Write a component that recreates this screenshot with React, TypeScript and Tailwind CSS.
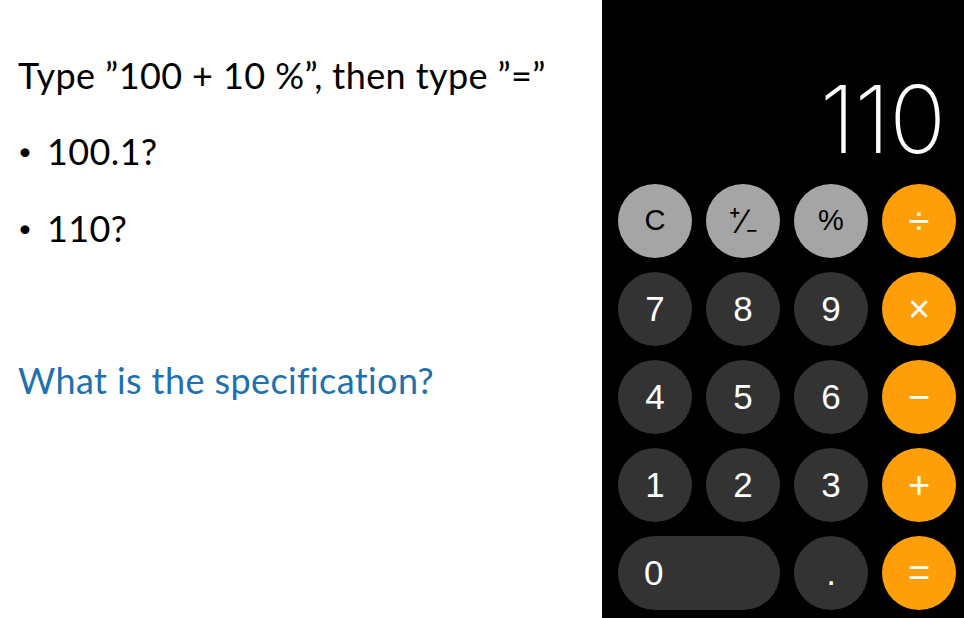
const keys: { label: string; kind: "fn" | "num" | "op"; wide?: boolean }[] = [
  { label: "C", kind: "fn" },
  { label: "⁺∕₋", kind: "fn" },
  { label: "%", kind: "fn" },
  { label: "÷", kind: "op" },
  { label: "7", kind: "num" },
  { label: "8", kind: "num" },
  { label: "9", kind: "num" },
  { label: "×", kind: "op" },
  { label: "4", kind: "num" },
  { label: "5", kind: "num" },
  { label: "6", kind: "num" },
  { label: "−", kind: "op" },
  { label: "1", kind: "num" },
  { label: "2", kind: "num" },
  { label: "3", kind: "num" },
  { label: "+", kind: "op" },
  { label: "0", kind: "num", wide: true },
  { label: ".", kind: "num" },
  { label: "=", kind: "op" },
]

function Key({ label, kind, wide }: { label: string; kind: string; wide?: boolean }) {
  const color =
    kind === "fn"
      ? "bg-[#a5a5a5] text-black text-[29px]"
      : kind === "op"
        ? "bg-[#fe9f0a] text-white text-[38px]"
        : "bg-[#333333] text-white text-[35px]"
  return (
    <div
      className={`h-[74px] rounded-full flex items-center ${color} ${
        wide ? "col-span-2 justify-start pl-[26px]" : "justify-center"
      } ${label === "⁺∕₋" ? "text-[34px]" : ""}`}
    >
      {label}
    </div>
  )
}

export default function App() {
  return (
    <div className="flex w-[964px] h-[618px] bg-white overflow-hidden font-['Lato',sans-serif]">
      {/* slide text */}
      <div className="w-[602px] pl-[18px] pt-[51px] text-[36px] tracking-[0.4px] text-black">
        <div className="leading-[48px]">Type ”100 + 10 %”, then type ”=”</div>
        <div className="mt-[28px] flex items-center leading-[48px]">
          <span className="w-[29px] text-[24px]">•</span>
          100.1?
        </div>
        <div className="mt-[29px] flex items-center leading-[48px]">
          <span className="w-[29px] text-[24px]">•</span>
          110?
        </div>
        <div className="mt-[104px] leading-[48px] text-[#2170b0]">What is the specification?</div>
      </div>

      {/* calculator */}
      <div className="w-[362px] h-[618px] bg-black pl-4 pr-[9px] font-['Liberation_Sans',sans-serif]">
        <div className="h-[184px] flex items-end justify-end pr-[10px] pb-[18px]">
          <span className="text-white text-[94px] leading-none font-extralight font-['Inter',sans-serif] tracking-[-1px]">
            110
          </span>
        </div>
        <div className="grid grid-cols-[repeat(4,74px)] gap-[14px]">
          {keys.map((k) => (
            <Key key={k.label} {...k} />
          ))}
        </div>
      </div>
    </div>
  )
}
